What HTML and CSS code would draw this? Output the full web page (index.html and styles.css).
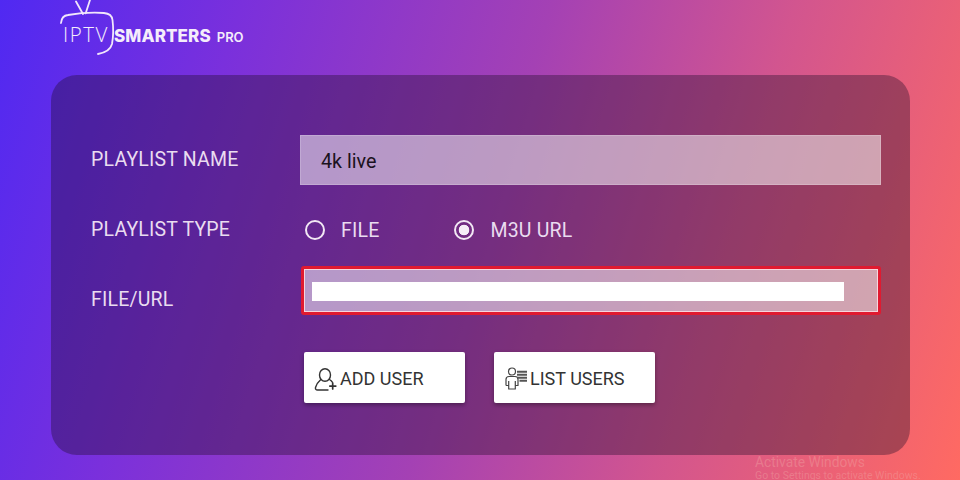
FILE: index.html
```html
<!DOCTYPE html>
<html lang="en">
<head>
<meta charset="utf-8">
<title>IPTV Smarters Pro</title>
<link rel="stylesheet" href="styles.css">
</head>
<body>
<div class="page">
  <header class="header">
    <div class="logo">
      <svg class="logo-tv" width="60" height="56" viewBox="0 0 60 56" fill="none" stroke="#f1e6fb" stroke-linecap="round">
        <path d="M1 23C1.500 17.500 3.500 15.500 8 15C20 13 34 12.300 44 13C49.500 13.500 52 15.500 52.500 20C53.500 28 53.500 36 52 44C50.500 50 46 52.500 38 54" stroke-width="1.800"/>
        <path d="M23 14L16 1.500M25.700 13.300L30 0" stroke-width="1.800"/>
      </svg>
      <span class="logo-iptv">IPTV</span>
      <span class="logo-smarters">SMARTERS</span>
      <span class="logo-pro">PRO</span>
    </div>
  </header>
  <main class="panel">
    <div class="row row-name">
      <div class="label">PLAYLIST NAME</div>
      <div class="field">4k live</div>
    </div>
    <div class="row row-type">
      <div class="label">PLAYLIST TYPE</div>
      <div class="radios">
        <div class="radio"><span class="dot"></span><span>FILE</span></div>
        <div class="radio"><span class="dot dot-on"></span><span>M3U URL</span></div>
      </div>
    </div>
    <div class="row row-url">
      <div class="label">FILE/URL</div>
      <div class="focus-ring">
        <div class="field field-url"><div class="redact"></div></div>
      </div>
    </div>
    <div class="actions">
      <button class="btn" type="button">
        <svg width="24" height="24" viewBox="0 0 24 24" fill="none" stroke="#333" stroke-width="1.400" stroke-linecap="round" stroke-linejoin="round">
          <ellipse cx="11" cy="8" rx="5.500" ry="6.300"/>
          <path d="M6.800 12.500C4 15 2.300 17.500 1.500 20.500C1.200 22.200 2 23 3.500 23H14"/>
          <path d="M15.500 12.500C16.800 13.300 17.800 14.300 18.500 15.300"/>
          <path d="M18.700 16.200V22M15.800 19.100H21.800" stroke-width="1.700"/>
        </svg>
        <span>ADD USER</span>
      </button>
      <button class="btn" type="button">
        <svg width="24" height="24" viewBox="0 0 24 24" fill="none" stroke="#444" stroke-width="1.200" stroke-linejoin="round">
          <circle cx="8" cy="4.500" r="3.500"/>
          <path d="M2 18.500V12.500C2 10.500 3.500 9.500 5 9.500H11C12.500 9.500 14 10.500 14 12.500V18.500H11.300M2 18.500H4.700M4.700 14V22H11.300V14"/>
          <path d="M13 4.800H23M13 7.800H23M13 10.800H23M15.500 13.800H23" stroke-width="2.100" stroke="#555"/>
        </svg>
        <span>LIST USERS</span>
      </button>
    </div>
  </main>
  <div class="watermark">
    <div class="wm-title">Activate Windows</div>
    <div class="wm-sub">Go to Settings to activate Windows.</div>
  </div>
</div>
</body>
</html>
```
FILE: styles.css
```css
* { box-sizing: border-box; }
html, body { margin: 0; padding: 0; }
body { font-family: Roboto, "Liberation Sans", sans-serif; }
.page {
  position: relative;
  width: 960px;
  height: 480px;
  overflow: hidden;
  padding: 0 50px 0 51px;
  background: linear-gradient(107deg, #5029f2 0%, #7a30dc 22%, #a441b4 50%, #d2558f 72%, #ff6a62 100%);
}
.header { height: 75px; }
.logo {
  position: relative;
  display: flex;
  align-items: baseline;
  height: 75px;
  padding: 34px 0 0 12px;
  color: #f4ecfb;
}
.logo-tv { position: absolute; left: 9px; top: 0; overflow: visible; }
.logo-iptv { font-family: "Open Sans", sans-serif; font-size: 20.500px; font-weight: 300; line-height: 0; width: 51px; letter-spacing: 1.500px; }
.logo-smarters { font-family: Inter, sans-serif; font-size: 17px; font-weight: 800; line-height: 0; letter-spacing: .1px; }
.logo-pro { font-family: Inter, sans-serif; font-size: 13px; font-weight: 600; line-height: 0; margin-left: 6px; }
.panel {
  height: 380px;
  padding: 60px 29px 0 40px;
  border-radius: 26px;
  background: rgba(30, 10, 40, .36);
}
.row { display: flex; align-items: center; }
.row-name { height: 50px; }
.row-type { height: 34px; margin-top: 28px; }
.row-url { height: 49px; margin-top: 19px; }
.row-url .label { padding-top: 18px; }
.label {
  width: 209px;
  flex: none;
  color: #eadcf0;
  font-size: 19.500px;
  letter-spacing: .2px;
  line-height: 24px;
}
.field {
  flex: 1;
  height: 50px;
  display: flex;
  align-items: center;
  padding: 2px 0 0 20px;
  border: 1px solid rgba(255, 255, 255, .18);
  background: rgba(255, 255, 255, .52);
  color: #1b1220;
  font-size: 19.700px;
}
.radios { display: flex; gap: 75px; padding-left: 5px; }
.radio { display: flex; align-items: center; gap: 16px; color: #eadcf0; font-size: 19.500px; letter-spacing: .2px; }
.dot {
  width: 20px;
  height: 20px;
  border: 2px solid #f2e8f4;
  border-radius: 50%;
}
.dot-on { background: radial-gradient(circle, #f6eef7 0 5px, transparent 5.600px); }
.focus-ring {
  flex: 1;
  height: 49px;
  margin-left: 1px;
  border: 3px solid #e01a30;
  border-radius: 3px;
}
.field-url {
  height: 100%;
  padding: 2px 33px 0 7px;
  border: 1px solid #f7d5dc;
}
.redact { flex: 1; height: 19px; background: #fff; }
.actions { display: flex; gap: 29px; margin: 37px 0 0 213px; }
.btn {
  width: 161px;
  height: 51px;
  display: flex;
  align-items: center;
  gap: 2px;
  padding: 2px 0 0 10px;
  border: 0;
  border-radius: 2px;
  background: #fff;
  color: #333;
  font-family: Roboto, sans-serif;
  font-size: 18px;
  box-shadow: 0 2px 4px rgba(0, 0, 0, .35);
}
.watermark { position: absolute; left: 755px; top: 455px; color: rgba(240, 165, 165, .42); }
.wm-title { font-size: 13.800px; line-height: 14px; }
.wm-sub { font-size: 10.500px; line-height: 14px; }
```
